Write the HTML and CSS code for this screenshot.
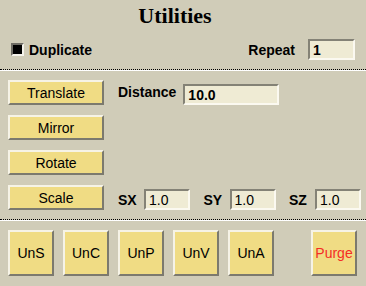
FILE: index.html
```html
<!DOCTYPE html>
<html lang="en">
<head>
    <meta charset="UTF-8">
    <title>Utilities</title>
    <link rel="stylesheet" href="styles.css">
</head>
<body>
    <h1 class="title">Utilities</h1>

    <div class="top-row">
        <label class="check">
            <span class="check-box"><span class="check-mark"></span></span>
            Duplicate
        </label>
        <div class="repeat">
            <span class="label">Repeat</span>
            <input class="field field-repeat bold" value="1">
        </div>
    </div>

    <div class="separator"></div>

    <div class="ops">
        <div class="op-row">
            <button class="btn btn-op">Translate</button>
            <span class="label label-distance">Distance</span>
            <input class="field field-distance bold" value="10.0">
        </div>
        <div class="op-row">
            <button class="btn btn-op">Mirror</button>
        </div>
        <div class="op-row">
            <button class="btn btn-op">Rotate</button>
        </div>
        <div class="op-row">
            <button class="btn btn-op">Scale</button>
            <div class="axes">
                <div class="axis">
                    <span class="label axis-label">SX</span>
                    <input class="field field-axis" value="1.0">
                </div>
                <div class="axis">
                    <span class="label axis-label">SY</span>
                    <input class="field field-axis" value="1.0">
                </div>
                <div class="axis">
                    <span class="label axis-label">SZ</span>
                    <input class="field field-axis" value="1.0">
                </div>
            </div>
        </div>
    </div>

    <div class="separator"></div>

    <div class="undo-row">
        <button class="btn btn-sq">UnS</button>
        <button class="btn btn-sq">UnC</button>
        <button class="btn btn-sq">UnP</button>
        <button class="btn btn-sq">UnV</button>
        <button class="btn btn-sq">UnA</button>
        <button class="btn btn-sq btn-purge">Purge</button>
    </div>
</body>
</html>
```

FILE: styles.css
```css
body {
    margin: 0;
    width: 366px;
    height: 286px;
    overflow: hidden;
    background-color: #d0ccb8;
    color: #000;
    font-family: "Liberation Sans", Arial, sans-serif;
    font-size: 14px;
}
.title {
    margin: 0;
    padding: 3px 16px 0 0;
    height: 25px;
    line-height: 25px;
    text-align: center;
    font-family: "Liberation Serif", "Times New Roman", serif;
    font-size: 22px;
    font-weight: bold;
}
.top-row {
    display: flex;
    align-items: center;
    justify-content: space-between;
    margin-top: 11px;
    height: 21px;
    padding: 0 11px 0 11px;
}
.check {
    display: flex;
    align-items: center;
    gap: 5px;
    font-weight: bold;
}
.check-box {
    box-sizing: border-box;
    width: 13px;
    height: 13px;
    border: 2px solid;
    border-color: #6e6c64 #f4f2ea #f4f2ea #6e6c64;
    background: #000;
}
.repeat {
    display: flex;
    align-items: center;
    gap: 13px;
}
.label {
    font-weight: bold;
}
.separator {
    margin-top: 9px;
    height: 0;
    border-top: 1px dotted #000;
    border-bottom: 1px solid #fff;
}
.field {
    box-sizing: border-box;
    height: 21px;
    padding: 0 3px;
    border: 2px solid;
    border-color: #848276 #fbf9f0 #fbf9f0 #848276;
    background: #efebd4;
    font-family: "Liberation Sans", Arial, sans-serif;
    font-size: 14px;
    color: #000;
    outline: none;
}
.bold {
    font-weight: bold;
}
.field-repeat {
    width: 47px;
}
.field-distance {
    width: 96px;
}
.field-axis {
    width: 46px;
}
.ops {
    display: flex;
    flex-direction: column;
    gap: 10px;
    padding: 9px 0 0 8px;
}
.op-row {
    display: flex;
    align-items: flex-end;
    height: 25px;
}
.btn {
    box-sizing: border-box;
    margin: 0;
    padding: 0;
    border: 2px solid;
    border-color: #f6f3e6 #7c7a6e #7c7a6e #f6f3e6;
    background: #f0dc84;
    font-family: "Liberation Sans", Arial, sans-serif;
    font-size: 14px;
    color: #000;
}
.btn-op {
    width: 96px;
    height: 25px;
}
.label-distance {
    margin: 0 7px 0 14px;
    align-self: center;
    padding-bottom: 2px;
}
.axes {
    display: flex;
    justify-content: space-between;
    width: 243px;
    margin-left: 14px;
}
.axis {
    display: flex;
    align-items: center;
}
.axis-label {
    width: 26px;
}
.undo-row {
    display: flex;
    gap: 9px;
    padding: 9px 9px 0 8px;
}
.btn-sq {
    width: 46px;
    height: 46px;
}
.btn-purge {
    margin-left: auto;
    color: #f42c24;
}
```
